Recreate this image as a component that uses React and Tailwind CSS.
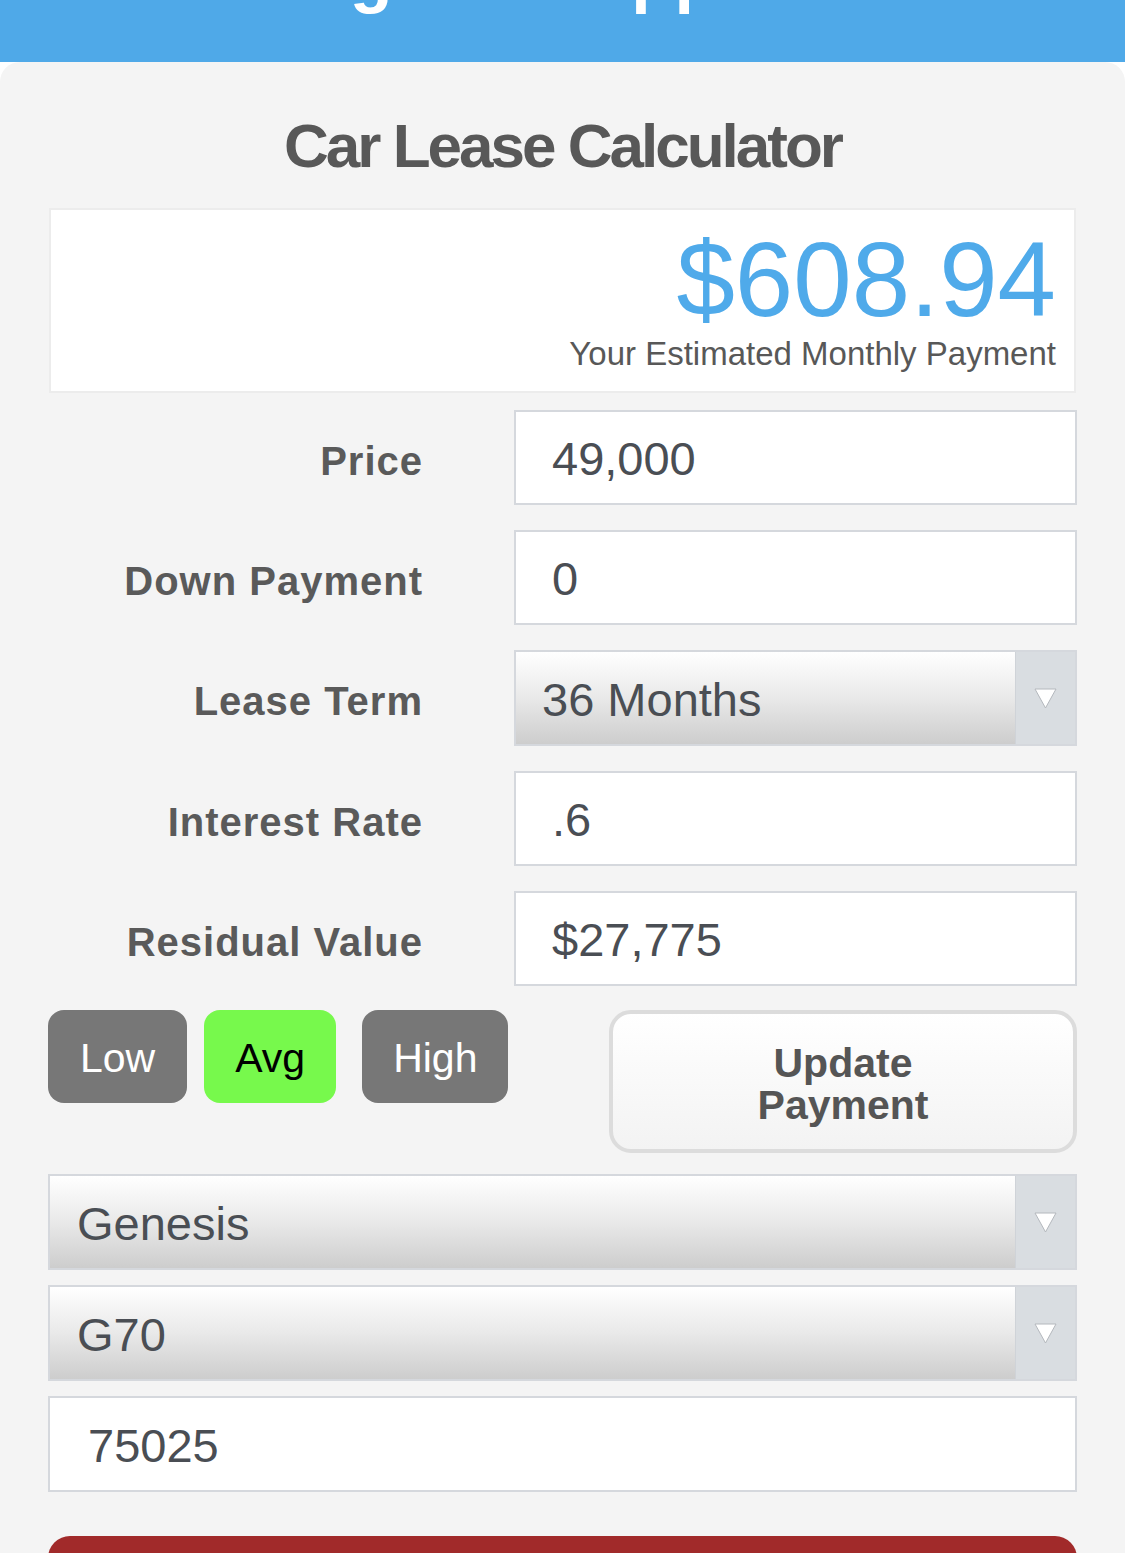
import React from "react";

const font = { fontFamily: '"Liberation Sans", Arial, sans-serif' };

const Arrow = () => (
  <svg width="23" height="21" viewBox="0 0 23 21">
    <polygon points="1,1 22,1 11.5,20" fill="#ffffff" stroke="#b4b8bd" strokeWidth="1" />
  </svg>
);

const Select = ({ value, pad = "pl-[26px]", className = "" }) => (
  <div
    className={`flex h-[96px] border-2 border-[#d5d8dd] bg-linear-to-b from-white via-[#e9e9e9] to-[#cdcdcd] ${className}`}
  >
    <div className={`flex flex-1 items-center ${pad} pt-[4px] text-[47px] text-[#4a4e54]`}>
      {value}
    </div>
    <div className="flex w-[60px] items-center justify-center border-l border-[#cfd3d8] bg-[#d9dde1]">
      <Arrow />
    </div>
  </div>
);

const Input = ({ value, className = "", pad = "pl-[36px]" }) => (
  <div
    className={`flex h-[95px] items-center border-2 border-[#d5d8dd] bg-white ${pad} pt-[4px] text-[47px] text-[#4a4e54] ${className}`}
  >
    {value}
  </div>
);

const rows = [
  { label: "Price", value: "49,000" },
  { label: "Down Payment", value: "0" },
  { label: "Lease Term", value: "36 Months", select: true },
  { label: "Interest Rate", value: ".6" },
  { label: "Residual Value", value: "$27,775" },
];

export default function App() {
  return (
    <div className="min-h-screen bg-white" style={font}>
      {/* header bar, title scrolled mostly out of view */}
      <div className="h-[62px] overflow-hidden bg-[#4fa9e8]">
        <h1 className="-mt-[60px] whitespace-nowrap pl-[125px] text-[70px] font-bold leading-[70px] tracking-[0.5px] text-white">
          Leasing Calc App
        </h1>
      </div>

      <div className="rounded-t-[20px] bg-[#f4f4f4] px-[48px] pb-[40px] pt-[49px]">
        <h2 className="text-center text-[62px] font-bold leading-[70px] tracking-[-3px] text-[#585858]">
          Car Lease Calculator
        </h2>

        <div className="mx-px mt-[27px] border-2 border-[#ececec] bg-white pb-[17px] pr-[18px] pt-[17px] text-right">
          <div className="text-[105px] leading-[105px] text-[#4faaea]">$608.94</div>
          <div className="mt-[2px] text-[33px] leading-[40px] text-[#585858]">
            Your Estimated Monthly Payment
          </div>
        </div>

        <div className="mt-[17px] grid grid-cols-[375px_1fr] gap-x-[91px] gap-y-[25px]">
          {rows.map((r) => (
            <React.Fragment key={r.label}>
              <div className="flex items-center justify-end pt-[6px] text-[40px] font-bold tracking-[1px] text-[#5a5a5a]">
                {r.label}
              </div>
              {r.select ? (
                <Select value={r.value} className="h-[95px]" />
              ) : (
                <Input value={r.value} />
              )}
            </React.Fragment>
          ))}
        </div>

        <div className="mt-[24px] flex items-start">
          <button className="h-[93px] rounded-[16px] bg-[#777777] px-[32px] pt-[4px] text-[41px] text-white">
            Low
          </button>
          <button className="ml-[17px] h-[93px] rounded-[16px] bg-[#77f94c] px-[31px] pt-[4px] text-[41px] text-black">
            Avg
          </button>
          <button className="ml-[26px] h-[93px] rounded-[16px] bg-[#777777] px-[31px] pt-[4px] text-[41px] text-white">
            High
          </button>
          <button className="ml-auto h-[143px] w-[468px] rounded-[22px] border-[4px] border-[#dcdcdc] bg-linear-to-b from-white to-[#f3f3f3] pt-[4px] text-[41px] font-bold leading-[42px] text-[#555555]">
            Update
            <br />
            Payment
          </button>
        </div>

        <Select value="Genesis" className="mt-[21px]" pad="pl-[27px]" />
        <Select value="G70" className="mt-[15px]" pad="pl-[27px]" />
        <Input value="75025" className="mt-[15px] h-[96px]" pad="pl-[38px]" />

        <button className="mt-[44px] h-[100px] w-full rounded-[22px] bg-[#a12a2a]" />
      </div>
    </div>
  );
}
